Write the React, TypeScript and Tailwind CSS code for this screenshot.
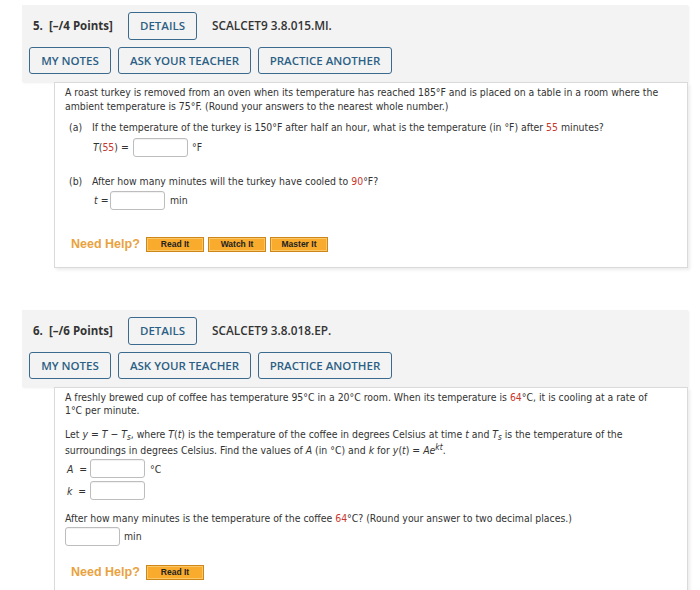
import type { ReactNode } from 'react'

const bodyFont = "font-['DejaVu_Sans_Condensed','DejaVu_Sans',sans-serif]"
const red = 'text-[#c8372d]'

function OutlineButton({ children, className }: { children: ReactNode; className: string }) {
  return (
    <button
      className={`${className} flex items-center justify-center rounded-[3px] border-[1.5px] border-[#3a6a8e] text-[#2c5f85] font-semibold text-[11.5px]`}
    >
      {children}
    </button>
  )
}

function QuestionHeader({ num, points, code }: { num: number; points: number; code: string }) {
  return (
    <div className="bg-[#f3f3f3] pl-[7px] pt-[7px] pb-[8px] shadow-[1px_1px_2px_rgba(0,0,0,0.07)] font-['Open_Sans',sans-serif]">
      <div className="flex items-center h-[28px]">
        <div className="ml-[4px] w-[95px] flex items-center text-[11.5px] font-bold text-[#333]">
          <span className="w-[16px]">{num}.</span>
          <span>[–/{points} Points]</span>
        </div>
        <OutlineButton className="w-[69px] h-[28px]">DETAILS</OutlineButton>
        <span className="ml-[15px] text-[11.8px] font-semibold text-[#333]">{code}</span>
      </div>
      <div className="mt-[7px] flex gap-[7px]">
        <OutlineButton className="w-[82px] h-[27px]">MY NOTES</OutlineButton>
        <OutlineButton className="w-[133px] h-[27px]">ASK YOUR TEACHER</OutlineButton>
        <OutlineButton className="w-[134px] h-[27px]">PRACTICE ANOTHER</OutlineButton>
      </div>
    </div>
  )
}

function Field() {
  return (
    <span className="inline-block w-[55px] h-[19px] rounded-[3px] border border-[#bdbdbd] bg-white shadow-[inset_0_1px_1px_rgba(0,0,0,0.06)]" />
  )
}

function HelpButton({ label }: { label: string }) {
  return (
    <span className="flex items-center justify-center w-[58px] h-[15px] border border-[#cf8618] bg-[#f8ab2c] shadow-[inset_0_0_0_1px_#fbc869] font-['Liberation_Sans',sans-serif] text-[8.5px] font-bold text-[#222]">
      {label}
    </span>
  )
}

function NeedHelp({ buttons, className }: { buttons: string[]; className: string }) {
  return (
    <div className={`${className} flex items-center h-[16px]`}>
      <span className="ml-[6px] w-[75px] font-['Liberation_Sans',sans-serif] text-[12.5px] font-bold text-[#e9a23e]">
        Need Help?
      </span>
      <div className="flex gap-[4px]">
        {buttons.map((b) => (
          <HelpButton key={b} label={b} />
        ))}
      </div>
    </div>
  )
}

function AnswerBox({ children }: { children: ReactNode }) {
  return (
    <div
      className={`ml-[32px] border border-[#dadada] bg-white shadow-[2px_2px_3px_rgba(0,0,0,0.08)] pl-[10px] text-[10.4px] leading-[14px] text-[#333] ${bodyFont}`}
    >
      {children}
    </div>
  )
}

export default function App() {
  return (
    <div className="w-[700px] h-[590px] overflow-hidden bg-white">
      <div className="ml-[22px] w-[666px] pt-[5px]">
        {/* Question 5 */}
        <QuestionHeader num={5} points={4} code="SCALCET9 3.8.015.MI." />
        <AnswerBox>
          <div className="pt-[2px] pb-[15px]">
            <p className="whitespace-nowrap">
              A roast turkey is removed from an oven when its temperature has reached 185°F and is placed on a table in a room where the
              <br />
              ambient temperature is 75°F. (Round your answers to the nearest whole number.)
            </p>

            <div className="mt-[7px] flex ml-[4px]">
              <span className="w-[23px]">(a)</span>
              <span className="whitespace-nowrap">
                If the temperature of the turkey is 150°F after half an hour, what is the temperature (in °F) after{' '}
                <span className={red}>55</span> minutes?
              </span>
            </div>
            <div className="mt-[3px] ml-[28px] flex items-center h-[20px]">
              <span className="w-[40px]">
                <i>T</i>(<span className={red}>55</span>) =
              </span>
              <Field />
              <span className="ml-[4px]">°F</span>
            </div>

            <div className="mt-[17px] flex ml-[4px]">
              <span className="w-[23px]">(b)</span>
              <span>
                After how many minutes will the turkey have cooled to <span className={red}>90</span>°F?
              </span>
            </div>
            <div className="mt-[2px] ml-[29px] flex items-center h-[20px]">
              <span className="w-[16px]">
                <i>t</i> =
              </span>
              <Field />
              <span className="ml-[5px]">min</span>
            </div>

            <NeedHelp className="mt-[26px]" buttons={['Read It', 'Watch It', 'Master It']} />
          </div>
        </AnswerBox>

        <div className="h-[42px]" />

        {/* Question 6 */}
        <QuestionHeader num={6} points={6} code="SCALCET9 3.8.018.EP." />
        <AnswerBox>
          <div className="pt-[2px] pb-[20px]">
            <p className="whitespace-nowrap leading-[13px] pt-[1px]">
              A freshly brewed cup of coffee has temperature 95°C in a 20°C room. When its temperature is{' '}
              <span className={red}>64</span>°C, it is cooling at a rate of
              <br />
              1°C per minute.
            </p>

            <p className="mt-[9px] whitespace-nowrap leading-[16px]">
              Let <i>y</i> = <i>T</i> − <i>T</i>
              <sub className="text-[8px]">
                <i>s</i>
              </sub>
              , where <i>T</i>(<i>t</i>) is the temperature of the coffee in degrees Celsius at time <i>t</i> and <i>T</i>
              <sub className="text-[8px]">
                <i>s</i>
              </sub>{' '}
              is the temperature of the
              <br />
              surroundings in degrees Celsius. Find the values of <i>A</i> (in °C) and <i>k</i> for <i>y</i>(<i>t</i>) ={' '}
              <i>Ae</i>
              <sup className="text-[8.5px]">
                <i>kt</i>
              </sup>
              .
            </p>

            <div className="mt-[1px] ml-[2px] flex items-center h-[19px]">
              <span className="w-[23px] whitespace-nowrap">
                <i>A</i> &nbsp;=
              </span>
              <Field />
              <span className="ml-[5px]">°C</span>
            </div>
            <div className="mt-[3px] ml-[2px] flex items-center h-[19px]">
              <span className="w-[23px] whitespace-nowrap">
                <i>k</i> &nbsp;=
              </span>
              <Field />
            </div>

            <p className="mt-[11px] whitespace-nowrap">
              After how many minutes is the temperature of the coffee <span className={red}>64</span>°C? (Round your answer to two
              decimal places.)
            </p>
            <div className="mt-[1px] flex items-center h-[20px]">
              <Field />
              <span className="ml-[4px]">min</span>
            </div>

            <NeedHelp className="mt-[18px]" buttons={['Read It']} />
          </div>
        </AnswerBox>
      </div>
    </div>
  )
}
